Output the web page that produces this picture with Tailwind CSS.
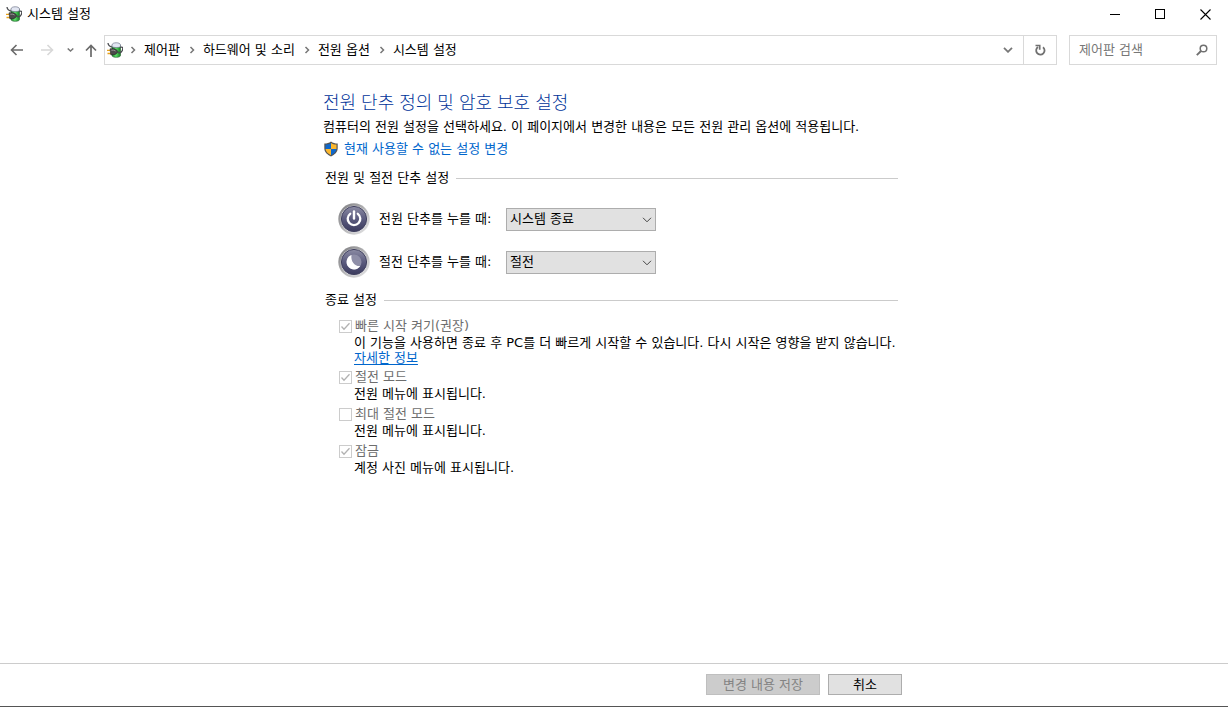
<!DOCTYPE html>
<html lang="ko">
<head>
  <meta charset="UTF-8" />
  <meta name="viewport" content="width=device-width, initial-scale=1" />
  <title>시스템 설정</title>
  <script src="https://cdn.jsdelivr.net/npm/@tailwindcss/browser@4"></script>
</head>
<body class="min-h-screen flex flex-col bg-white text-black text-[13px] leading-5 font-['DejaVu_Sans','Noto_Sans_CJK_KR',sans-serif] border-b border-[#555]">

  <!-- Shared icons -->
  <svg class="absolute size-0" aria-hidden="true">
    <defs>
      <linearGradient id="green" x1="0" x2="1" y1="0" y2="0">
        <stop offset="0" stop-color="#167c26" />
        <stop offset="0.45" stop-color="#5fe06a" />
        <stop offset="1" stop-color="#128020" />
      </linearGradient>
      <linearGradient id="rim" x1="0" x2="1" y1="0" y2="1">
        <stop offset="0" stop-color="#77777a" />
        <stop offset="0.5" stop-color="#b4b4b6" />
        <stop offset="1" stop-color="#e9e9ea" />
      </linearGradient>
      <linearGradient id="face" x1="0" x2="0" y1="0" y2="1">
        <stop offset="0" stop-color="#8c8ca4" />
        <stop offset="0.5" stop-color="#5b5b7e" />
        <stop offset="1" stop-color="#3b3b5e" />
      </linearGradient>
      <symbol id="battery" viewBox="0 0 16 16">
        <path d="M5 3.500v10c0 2.400 8.500 2.400 8.500 0v-10z" fill="url(#green)" stroke="#1d5a26" stroke-width=".6" />
        <path d="M5 3c0-3 8.500-3 8.500 0v1.800c-2 1-6.500 1-8.500 0z" fill="#e2e6f2" stroke="#70758a" stroke-width=".7" />
        <path d="M1 1c.3 2.500 1.500 3.500 4 4.200M13 5.500c3-1.500 3.300 1 2.200 3.200-1 2-2.200 2.500-4.200 2" fill="none" stroke="#4a4c50" stroke-width="1.300" />
        <path d="M0 8.300h3.500M.5 11.500h3.500" stroke="#e8a21c" stroke-width="1.300" />
        <path d="M3 6.800h3.500c2 0 3.300 1.300 4.500 2.600-1 2-2.400 3.300-4.500 3.300H3.800z" fill="#4a4a4a" stroke="#222" stroke-width=".6" />
        <path d="M4.300 8.200h2.500l1.700.8" fill="none" stroke="#aaa" stroke-width=".8" />
      </symbol>
      <symbol id="crumb" viewBox="0 0 6 8">
        <path d="M1.500 1 4.500 4 1.500 7" fill="none" stroke="#777" stroke-width="1.500" />
      </symbol>
      <symbol id="down" viewBox="0 0 10 6">
        <path d="M1 .8 5 4.800 9 .8" fill="none" stroke="currentColor" />
      </symbol>
      <symbol id="tick" viewBox="0 0 13 13">
        <path d="M2.500 6.500 5 9.200 10.500 3.200" fill="none" stroke="#b2b2b2" stroke-width="1.300" />
      </symbol>
    </defs>
  </svg>

  <!-- Title bar -->
  <header class="flex h-7 items-center pl-1.5">
    <svg class="size-4"><use href="#battery" /></svg>
    <h1 class="ml-[5px] flex-1">시스템 설정</h1>
    <button type="button" aria-label="최소화" class="flex h-full w-[45px] items-center justify-center hover:bg-gray-200">
      <svg class="size-[11px]" viewBox="0 0 11 11"><path d="M0 5.500h10" stroke="#000" /></svg>
    </button>
    <button type="button" aria-label="최대화" class="flex h-full w-[45px] items-center justify-center hover:bg-gray-200">
      <svg class="size-[11px]" viewBox="0 0 11 11"><path d="M.5.500h9v9h-9z" fill="none" stroke="#000" shape-rendering="crispEdges" /></svg>
    </button>
    <button type="button" aria-label="닫기" class="flex h-full w-[45px] items-center justify-center hover:bg-red-600">
      <svg class="size-[11px]" viewBox="0 0 11 11"><path d="M.5.500l10 10M10.500.500l-10 10" stroke="#000" stroke-width="1.100" /></svg>
    </button>
  </header>

  <!-- Navigation -->
  <nav class="mt-[7px] flex h-[30px] items-center pl-2.5 pr-[11px]">
    <button type="button" aria-label="뒤로" class="mr-[18px]">
      <svg class="h-3 w-[13px]" viewBox="0 0 13 12"><path d="M13 6H1.500M6.500 1l-5 5 5 5" fill="none" stroke="#6a6a6a" stroke-width="1.600" /></svg>
    </button>
    <button type="button" aria-label="앞으로" disabled class="mr-[13px]">
      <svg class="h-3 w-[13px]" viewBox="0 0 13 12"><path d="M0 6h11.500M6.500 1l5 5-5 5" fill="none" stroke="#d8d8d8" stroke-width="1.600" /></svg>
    </button>
    <button type="button" aria-label="최근 위치" class="mr-[11px]">
      <svg class="h-1 w-[7px]" viewBox="0 0 7 4"><path d="M.7.500l2.800 2.500L6.300.5" fill="none" stroke="#777" stroke-width="1.500" /></svg>
    </button>
    <button type="button" aria-label="위로" class="mr-[7px]">
      <svg class="h-[13px] w-3" viewBox="0 0 12 13"><path d="M6 13V1.500M1 6.500l5-5 5 5" fill="none" stroke="#6a6a6a" stroke-width="1.700" /></svg>
    </button>

    <div class="flex h-full flex-1 items-center border border-[#d9d9d9]">
      <svg class="ml-0.5 size-4"><use href="#battery" /></svg>
      <ol class="-ml-0.5 flex flex-1 items-center">
        <li class="flex items-center"><svg class="ml-[9px] mr-2 h-2 w-1.5"><use href="#crumb" /></svg><a href="#">제어판</a></li>
        <li class="flex items-center"><svg class="ml-[9px] mr-2 h-2 w-1.5"><use href="#crumb" /></svg><a href="#">하드웨어 및 소리</a></li>
        <li class="flex items-center"><svg class="ml-[9px] mr-2 h-2 w-1.5"><use href="#crumb" /></svg><a href="#">전원 옵션</a></li>
        <li class="flex items-center"><svg class="ml-[9px] mr-2 h-2 w-1.5"><use href="#crumb" /></svg><a href="#">시스템 설정</a></li>
      </ol>
      <button type="button" aria-label="이전 위치" class="flex h-full w-[30px] items-center justify-center">
        <svg class="h-1.5 w-2.5" viewBox="0 0 10 6"><path d="M1 .8l4 4 4-4" fill="none" stroke="#777" stroke-width="1.800" /></svg>
      </button>
      <button type="button" aria-label="새로 고침" class="flex h-full w-[33px] items-center justify-center border-l border-[#d9d9d9]">
        <svg class="size-3" viewBox="0 0 12 12">
          <path d="M9 3.200A4.200 4.200 0 1 1 4 3" fill="none" stroke="#707070" stroke-width="1.800" />
          <path d="M1.500 1.500h4.200v4.200" fill="none" stroke="#707070" stroke-width="1.700" />
        </svg>
      </button>
    </div>

    <div class="ml-3 flex h-full w-[148px] items-center border border-[#d9d9d9] pl-[9px] pr-2">
      <input type="search" aria-label="제어판 검색" placeholder="제어판 검색" class="min-w-0 flex-1 outline-none placeholder:text-[#777]" />
      <svg class="size-3" viewBox="0 0 12 12">
        <circle cx="7.500" cy="4.500" r="3.300" fill="none" stroke="#707070" stroke-width="1.500" />
        <path d="M5 7 .8 11.200" stroke="#707070" stroke-width="1.900" />
      </svg>
    </div>
  </nav>

  <main class="mx-auto mt-[26px] w-full max-w-[582px] flex-1">
    <h2 class="text-[18px] leading-6 font-light text-[#003399] font-['Liberation_Sans','Noto_Sans_CJK_KR',sans-serif]">전원 단추 정의 및 암호 보호 설정</h2>
    <p class="mt-0.5">컴퓨터의 전원 설정을 선택하세요. 이 페이지에서 변경한 내용은 모든 전원 관리 옵션에 적용됩니다.</p>
    <a href="#" class="mt-0.5 flex items-center gap-[5px] text-[#0066cc]">
      <svg class="size-4" viewBox="0 0 16 16">
        <path d="M8 .5C6 2 4 2.500 1.300 2.500v4.800c0 3.800 3 6.500 6.700 8.200 3.700-1.700 6.700-4.400 6.700-8.200V2.500C12 2.500 10 2 8 .5z" fill="#555" />
        <path d="M8 1.900C6.300 3 4.800 3.500 2.500 3.600V8H8z" fill="#0f68cc" />
        <path d="M8 1.900c1.700 1.100 3.200 1.600 5.500 1.700V8H8z" fill="#fcb72e" />
        <path d="M2.500 8c.4 2.900 2.700 4.800 5.500 6.200V8z" fill="#fcb72e" />
        <path d="M13.500 8c-.4 2.900-2.700 4.800-5.500 6.200V8z" fill="#0f68cc" />
      </svg>
      현재 사용할 수 없는 설정 변경
    </a>

    <section class="mt-[9px] pl-0.5 pr-[7px]">
      <h3 class="flex items-center gap-[7px] after:h-px after:flex-1 after:bg-[#cbcbcb]">전원 및 절전 단추 설정</h3>
      <div class="mt-[15px] flex flex-col gap-[11px] pl-[13px]">
        <div class="flex h-8 items-center">
          <svg class="size-8" viewBox="0 0 32 32">
            <circle cx="16" cy="16" r="15.700" fill="url(#rim)" />
            <circle cx="16" cy="16" r="13.300" fill="#e4e4ea" />
            <circle cx="16" cy="16" r="12.600" fill="url(#face)" stroke="#42425f" />
            <path d="M12.200 10.800a6.300 6.300 0 1 0 7.600 0" fill="none" stroke="#fff" stroke-width="2.300" stroke-linecap="round" />
            <path d="M16 8.500v7" stroke="#fff" stroke-width="2.400" stroke-linecap="round" />
          </svg>
          <label for="power" class="ml-[9px] w-[127px]">전원 단추를 누를 때:</label>
          <div class="relative">
            <select id="power" class="h-[23px] w-[150px] appearance-none border border-[#adadad] bg-[#e1e1e1] pl-[3px] pr-5 leading-5">
              <option>시스템 종료</option>
              <option>절전</option>
            </select>
            <svg class="pointer-events-none absolute right-1 top-[9px] h-1.5 w-2.5 text-[#444]"><use href="#down" /></svg>
          </div>
        </div>
        <div class="flex h-8 items-center">
          <svg class="size-8" viewBox="0 0 32 32">
            <circle cx="16" cy="16" r="15.700" fill="url(#rim)" />
            <circle cx="16" cy="16" r="13.300" fill="#e4e4ea" />
            <circle cx="16" cy="16" r="12.600" fill="url(#face)" stroke="#42425f" />
            <circle cx="16" cy="16" r="7.500" fill="#8f8fa8" />
            <path d="M13.500 8.900a7.500 7.500 0 1 0 8.800 11.200C16.500 20.500 12.500 15 13.500 8.900z" fill="#fff" />
          </svg>
          <label for="sleep" class="ml-[9px] w-[127px]">절전 단추를 누를 때:</label>
          <div class="relative">
            <select id="sleep" class="h-[23px] w-[150px] appearance-none border border-[#adadad] bg-[#e1e1e1] pl-[3px] pr-5 leading-5">
              <option>절전</option>
              <option>시스템 종료</option>
            </select>
            <svg class="pointer-events-none absolute right-1 top-[9px] h-1.5 w-2.5 text-[#444]"><use href="#down" /></svg>
          </div>
        </div>
      </div>
    </section>

    <section class="mt-3 pl-0.5 pr-[7px]">
      <h3 class="flex items-center gap-[7px] after:h-px after:flex-1 after:bg-[#cbcbcb]">종료 설정</h3>
      <div class="mt-2 flex flex-col gap-1 pl-3.5">
        <div>
          <label class="relative flex h-4 items-center gap-[3px] text-[#6d6d6d]">
            <input type="checkbox" checked disabled class="size-[13px] appearance-none border border-[#cccccc]" />
            <svg class="absolute left-0 size-[13px]"><use href="#tick" /></svg>
            빠른 시작 켜기(권장)
          </label>
          <p class="mt-px pl-[15px] leading-[15px]">이 기능을 사용하면 종료 후 PC를 더 빠르게 시작할 수 있습니다. 다시 시작은 영향을 받지 않습니다.<br />
            <a href="#" class="text-[#0066cc] underline underline-offset-2">자세한 정보</a></p>
        </div>
        <div>
          <label class="relative flex h-4 items-center gap-[3px] text-[#6d6d6d]">
            <input type="checkbox" checked disabled class="size-[13px] appearance-none border border-[#cccccc]" />
            <svg class="absolute left-0 size-[13px]"><use href="#tick" /></svg>
            절전 모드
          </label>
          <p class="mt-px pl-[15px] leading-4">전원 메뉴에 표시됩니다.</p>
        </div>
        <div>
          <label class="relative flex h-4 items-center gap-[3px] text-[#6d6d6d]">
            <input type="checkbox" disabled class="size-[13px] appearance-none border border-[#cccccc]" />
            최대 절전 모드
          </label>
          <p class="mt-px pl-[15px] leading-4">전원 메뉴에 표시됩니다.</p>
        </div>
        <div>
          <label class="relative flex h-4 items-center gap-[3px] text-[#6d6d6d]">
            <input type="checkbox" checked disabled class="size-[13px] appearance-none border border-[#cccccc]" />
            <svg class="absolute left-0 size-[13px]"><use href="#tick" /></svg>
            잠금
          </label>
          <p class="mt-px pl-[15px] leading-4">계정 사진 메뉴에 표시됩니다.</p>
        </div>
      </div>
    </section>
  </main>

  <footer class="border-t border-[#cccccc] pb-[11px] pt-2.5">
    <div class="mx-auto flex w-full max-w-[582px] justify-end gap-2 pr-[3px]">
      <button type="submit" disabled class="h-[21px] w-[114px] border border-[#bfbfbf] bg-[#cccccc] leading-[19px] text-[#838383]">변경 내용 저장</button>
      <button type="button" class="h-[21px] w-[74px] border border-[#adadad] bg-[#e1e1e1] leading-[19px]">취소</button>
    </div>
  </footer>
</body>
</html>
